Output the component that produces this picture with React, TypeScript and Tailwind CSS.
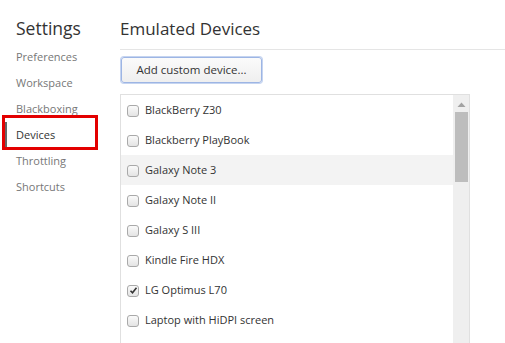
import React from 'react';

const sections = ['Preferences', 'Workspace', 'Blackboxing', 'Devices', 'Throttling', 'Shortcuts'];

const devices = [
  { name: 'BlackBerry Z30', checked: false },
  { name: 'Blackberry PlayBook', checked: false },
  { name: 'Galaxy Note 3', checked: false, hover: true },
  { name: 'Galaxy Note II', checked: false },
  { name: 'Galaxy S III', checked: false },
  { name: 'Kindle Fire HDX', checked: false },
  { name: 'LG Optimus L70', checked: true },
  { name: 'Laptop with HiDPI screen', checked: false },
];

const Checkbox: React.FC<{ checked: boolean }> = ({ checked }) => (
  <span className="w-[12px] h-[12px] rounded-[3px] border border-[#a9a9a9] bg-gradient-to-b from-[#fafafa] to-[#e4e4e4] flex items-center justify-center shrink-0">
    {checked && (
      <svg width="9" height="9" viewBox="0 0 9 9">
        <path d="M1.5 4.8 L3.5 6.8 L7.5 1.8" stroke="#333" strokeWidth="1.6" fill="none" />
      </svg>
    )}
  </span>
);

const App: React.FC = () => {
  return (
    <div className="flex h-[343px] w-[505px] overflow-hidden bg-white text-[11px] text-[#333] font-['Open_Sans',sans-serif]">
      <div className="w-[120px] shrink-0 pl-[4px] pt-[15px] relative">
        <h1 className="pl-[12px] h-[26px] leading-[26px] text-[17.5px] text-[#333]">Settings</h1>
        <div className="flex flex-col mt-[3px]">
          {sections.map((s) => (
            <div
              key={s}
              className={
                'h-[26px] flex items-center pl-[9px] border-l-[3px] ' +
                (s === 'Devices' ? 'border-[#666] text-[#333]' : 'border-transparent text-[#777]')
              }
            >
              {s}
            </div>
          ))}
        </div>
        <div className="absolute left-[2px] top-[115px] w-[96px] h-[35px] border-[3px] border-[#e30000]" />
      </div>

      <div className="flex-1 flex flex-col min-w-0">
        <div className="pt-[16px] h-[50px] border-b border-[#e5e5e5]">
          <h2 className="leading-[26px] text-[17px] text-[#333]">Emulated Devices</h2>
        </div>
        <div className="pt-[7px] pl-[1px]">
          <button className="h-[26px] w-[141px] rounded-[3px] border border-[#9db5e4] bg-gradient-to-b from-[#fbfbfb] to-[#efefef] text-[11.5px] text-[#333] shadow-[0_0_0_1px_#c5d4f0]">
            Add custom device...
          </button>
        </div>
        <div className="mt-[11px] w-[350px] flex-1 border-t border-l border-r border-[#e0e0e0] flex min-h-0">
          <div className="flex-1 flex flex-col">
            {devices.map((d) => (
              <div
                key={d.name}
                className={'h-[30px] flex items-center gap-[6px] pl-[6px] pt-[1px] shrink-0 ' + (d.hover ? 'bg-[#f3f3f3]' : '')}
              >
                <Checkbox checked={d.checked} />
                <span>{d.name}</span>
              </div>
            ))}
          </div>
          <div className="w-[16px] bg-[#efefef] flex flex-col items-center">
            <svg width="9" height="6" viewBox="0 0 9 6" className="mt-[7px]">
              <path d="M4.5 0.5 L8.5 5 L0.5 5 Z" fill="#a3a3a3" />
            </svg>
            <div className="mt-[4px] w-[13px] h-[70px] bg-[#bdbdbd]" />
          </div>
        </div>
      </div>
    </div>
  );
};

export default App;
